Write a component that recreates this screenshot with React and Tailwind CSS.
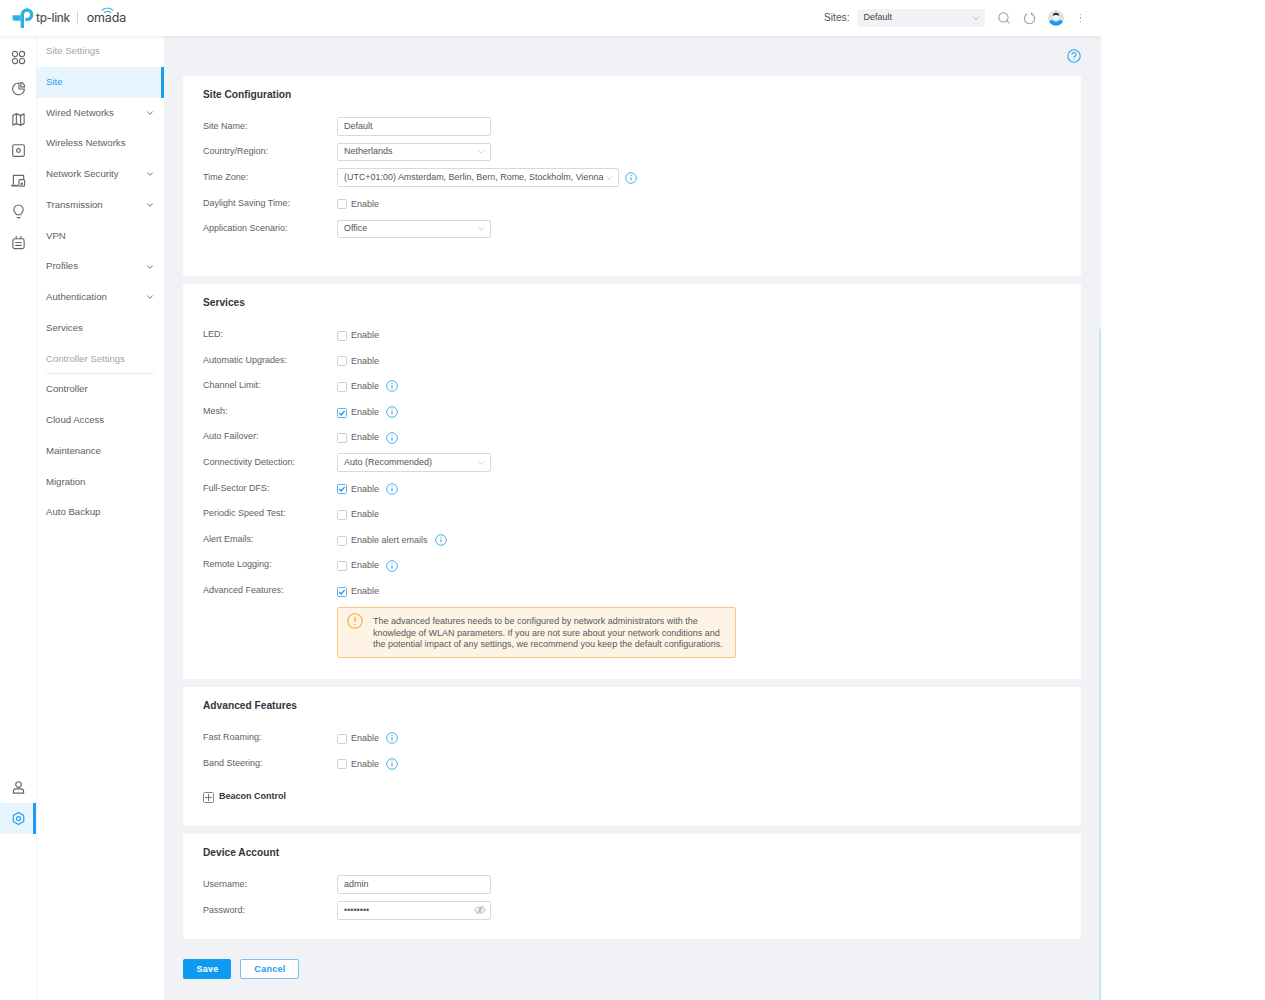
import { ChevronDown, Search } from 'lucide-react';

const navItems = [
  { label: 'Site Settings', header: true },
  { label: 'Site', active: true },
  { label: 'Wired Networks', more: true },
  { label: 'Wireless Networks' },
  { label: 'Network Security', more: true },
  { label: 'Transmission', more: true },
  { label: 'VPN' },
  { label: 'Profiles', more: true },
  { label: 'Authentication', more: true },
  { label: 'Services' },
  { label: 'Controller Settings', header: true, line: true },
  { label: 'Controller' },
  { label: 'Cloud Access' },
  { label: 'Maintenance' },
  { label: 'Migration' },
  { label: 'Auto Backup' },
];

function Logo() {
  return (
    <div className="flex items-center h-full pl-[12px]">
      <svg width="23" height="21" viewBox="0 0 23 21" fill="none" stroke="#2eb0e0" strokeWidth="3.4">
        <path d="M10.3 20V6.7a4.7 4.7 0 1 1 4.7 4.7h-1.6" />
        <path d="M0.5 7.3H8.6V12.7H2.5A2 2 0 0 1 .5 10.7Z" fill="#2eb0e0" stroke="none" />
      </svg>
      <span className="ml-[1px] mt-[1px] text-[11.7px] font-medium text-[#50555a] tracking-[-0.35px] font-['Inter',sans-serif]">tp-link</span>
      <div className="ml-[7px] h-[14px] w-px bg-[#d6d6d6]" />
      <div className="relative ml-[9px]">
        <span className="text-[12.5px] text-[#3d4247] tracking-[-0.1px] font-['Inter',sans-serif]">omada</span>
        <svg width="13" height="8" viewBox="0 0 14 8" fill="none" stroke="#2fa7e6" strokeWidth="1.2" className="absolute left-[14px] top-[-3px]">
          <path d="M1 4.5a8 8 0 0 1 12 0" />
          <path d="M3.5 7a4.5 4.5 0 0 1 7 0" />
        </svg>
      </div>
    </div>
  );
}

function RailIcon({ children, active }) {
  return (
    <div className={`relative flex items-center justify-center h-[30.75px] w-full ${active ? 'bg-[#e9f5fe] text-[#1a9cf0]' : 'text-[#62676c]'}`}>
      <svg width="15" height="15" viewBox="0 0 16 16" fill="none" stroke="currentColor" strokeWidth="1.2" strokeLinejoin="round" strokeLinecap="round">
        {children}
      </svg>
      {active && <div className="absolute right-0 top-0 bottom-0 w-[3px] bg-[#1a9cf0]" />}
    </div>
  );
}

function Sidebar() {
  return (
    <div className="flex shrink-0 h-full">
      <div className="flex flex-col w-[37px] bg-white pt-[6.6px] pb-[166px] border-r border-[#f0f2f5]">
        <RailIcon>
          <rect x="1.5" y="1.5" width="5.5" height="5.5" rx="2.5" />
          <rect x="9" y="1.5" width="5.5" height="5.5" rx="2.5" />
          <rect x="1.5" y="9" width="5.5" height="5.5" rx="2.5" />
          <rect x="9" y="9" width="5.5" height="5.5" rx="2.5" />
        </RailIcon>
        <RailIcon>
          <path d="M8.5 2.2A6.3 6.3 0 1 0 14.3 8.5H8.5Z" />
          <path d="M10.5 1.5a5 5 0 0 1 4 4.8h-4Z" />
        </RailIcon>
        <RailIcon>
          <path d="M2 3.6 5.7 2l4.6 1.6L14 2v10.4l-3.7 1.6-4.6-1.6L2 14Z" />
          <path d="M5.7 2v10.4M10.3 3.6V14" />
        </RailIcon>
        <RailIcon>
          <rect x="1.8" y="1.8" width="12.4" height="12.4" rx="1.5" />
          <circle cx="8" cy="8" r="2" />
        </RailIcon>
        <RailIcon>
          <path d="M2.5 12V2.5h11V6" />
          <path d="M1 13.5h6" strokeWidth="1.8" />
          <rect x="8.5" y="7" width="6" height="7" rx="1" />
          <circle cx="11.5" cy="11.5" r="0.8" />
        </RailIcon>
        <RailIcon>
          <path d="M6 11.5C5.5 10 3 8.8 3 6a5 5 0 0 1 10 0c0 2.8-2.5 4-3 5.5Z" />
          <path d="M6.5 14.5h3" />
        </RailIcon>
        <RailIcon>
          <rect x="2" y="4" width="12" height="10.5" rx="2" />
          <path d="M5.5 1.5V4M10.5 1.5V4M5 8h6M5 11h6" />
        </RailIcon>
        <div className="mt-auto">
          <RailIcon>
            <circle cx="8" cy="4.8" r="3" />
            <path d="M2.5 14v-1.5A3 3 0 0 1 5.5 9.5h5a3 3 0 0 1 3 3V14Z" />
          </RailIcon>
          <RailIcon active>
            <path d="M8 1.5 13.6 4.7v6.6L8 14.5l-5.6-3.2V4.7Z" />
            <circle cx="8" cy="8" r="2.2" />
          </RailIcon>
        </div>
      </div>
      <div className="w-[127px] bg-white">
        {navItems.map((item) => (
          <div
            key={item.label}
            className={`relative flex items-center h-[30.75px] pl-[9px] pr-[9px] text-[9.6px] ${
              item.active ? 'bg-[#e9f5fe] text-[#1a9cf0]' : item.header ? 'text-[#a3a6a9]' : 'text-[#5c6166]'
            }`}
          >
            <span className="flex-1">{item.label}</span>
            {item.more && <ChevronDown size={10} strokeWidth={2} className="text-[#555]" />}
            {item.active && <div className="absolute right-0 top-0 bottom-0 w-[3px] bg-[#1a9cf0]" />}
            {item.line && <div className="absolute left-[9px] right-[10px] bottom-0 h-px bg-[#e8eaec]" />}
          </div>
        ))}
      </div>
    </div>
  );
}

function TopBar() {
  return (
    <div className="relative z-10 flex items-center justify-between h-[36px] bg-white shadow-[0_1px_4px_rgba(0,0,0,0.08)] shrink-0">
      <Logo />
      <div className="flex items-center h-full pr-[20px]">
        <span className="text-[10.2px] text-[#4d5257]">Sites:</span>
        <div className="flex items-center justify-between ml-[7px] w-[128px] h-[18px] bg-[#f0f2f5] rounded-sm pl-[7px] pr-[4px] text-[9px] text-[#444]">
          Default
          <ChevronDown size={10} className="text-[#aaa]" />
        </div>
        <Search size={14} strokeWidth={1.8} className="ml-[12px] text-[#a0a0a0]" />
        <svg width="13" height="13" viewBox="0 0 14 14" fill="none" stroke="#a5a5a5" strokeWidth="1.3" className="ml-[12.5px]">
          <path d="M9.5 2.2a5.5 5.5 0 1 1-5 0" />
          <path d="M9.3 0.4v2.3h2.2" />
        </svg>
        <svg width="16" height="16" viewBox="0 0 16 16" className="ml-[11.5px]">
          <circle cx="8" cy="8" r="8" fill="#dfe3e6" />
          <path d="M1 11.5A8 8 0 0 0 15 11.5C13.5 9.5 11 10 8 12 5 10 2.5 9.5 1 11.5Z" fill="#1a9cf0" />
          <circle cx="8" cy="6.5" r="3" fill="#f4f4f4" />
          <path d="M4.8 6a3.2 3.2 0 0 1 6.4 0C9.5 4.5 6.5 4.5 4.8 6Z" fill="#333" />
        </svg>
        <div className="ml-[16px] flex flex-col gap-[2px]">
          <div className="w-[1.5px] h-[1.5px] bg-[#aaa]" />
          <div className="w-[1.5px] h-[1.5px] bg-[#aaa]" />
          <div className="w-[1.5px] h-[1.5px] bg-[#aaa]" />
        </div>
      </div>
    </div>
  );
}

function Info({ className = 'ml-[7px]' }) {
  return (
    <svg width="12" height="12" viewBox="0 0 12 12" fill="none" stroke="#35a6ee" strokeWidth="0.9" className={`-mt-[1px] ${className}`}>
      <circle cx="6" cy="6" r="5.3" />
      <path d="M6 5.2v3.4" strokeWidth="1.1" />
      <path d="M6 3v1" strokeWidth="1.1" />
    </svg>
  );
}

function Row({ label, children }) {
  return (
    <div className="flex items-center h-[25.6px]">
      <div className="w-[134px] shrink-0 text-[#5c6166]">{label}</div>
      <div className="flex items-center">{children}</div>
    </div>
  );
}

function Field({ value, wide, select, eye }) {
  return (
    <div className={`flex items-center justify-between h-[18.5px] bg-white border border-[#d9d9d9] rounded-[2px] pl-[6px] pr-[4px] text-[#555] ${wide ? 'w-[282px] text-[8.95px]' : 'w-[154px]'}`}>
      <span className="whitespace-nowrap">{value}</span>
      {select && <ChevronDown size={10} strokeWidth={1.3} className="shrink-0 text-[#a9a9a9]" />}
      {eye && (
        <svg width="12" height="10" viewBox="0 0 12 10" fill="none" stroke="#b5b5b5" strokeWidth="1" className="shrink-0">
          <path d="M0.7 5C2 3 4 2 6 2s4 1 5.3 3C10 7 8 8 6 8S2 7 .7 5Z" />
          <circle cx="6" cy="5" r="1.5" />
          <path d="M9.5 .7 2.5 9.3" />
        </svg>
      )}
    </div>
  );
}

function Check({ checked, text = 'Enable', info }) {
  return (
    <div className="flex items-center pt-[2px]">
      <div className={`flex items-center justify-center w-[10px] h-[10px] bg-white border rounded-[1.5px] ${checked ? 'border-[#55b3f2]' : 'border-[#cfcfcf]'}`}>
        {checked && (
          <svg width="8" height="8" viewBox="0 0 8 8" fill="none" stroke="#1a8fe0" strokeWidth="1.2">
            <path d="M1.3 4 3.2 6l3.5-4.2" />
          </svg>
        )}
      </div>
      <span className="ml-[4px] text-[#5c6166]">{text}</span>
      {info && <Info />}
    </div>
  );
}

function Card({ title, top = 'mt-[1px]', pb, children }) {
  return (
    <div className={`bg-white rounded-[2px] px-[20px] ${pb}`}>
      <div className="flex items-center h-[37px] font-bold text-[10.2px] text-[#33373b]">{title}</div>
      <div className={top}>{children}</div>
    </div>
  );
}

export default function App() {
  return (
    <div className="relative flex flex-col w-[1101px] h-screen overflow-hidden bg-[#f0f2f5] text-[9px] font-['Liberation_Sans',Arial,sans-serif]">
      <TopBar />
      <div className="flex flex-1 min-h-0">
        <Sidebar />
        <div className="flex-1 pl-[19px] pr-[20px]">
          <div className="flex items-center justify-end h-[40px]">
            <svg width="14" height="14" viewBox="0 0 14 14" fill="none" stroke="#2fa3ee" strokeWidth="1.1">
              <circle cx="7" cy="7" r="6.2" />
              <path d="M5 5.4a2 2 0 1 1 3 1.8c-.7.4-1 .8-1 1.5" />
              <path d="M7 10v.8" />
            </svg>
          </div>
          <div className="flex flex-col gap-[8px]">
            <Card title="Site Configuration" top="mt-[0.7px]" pb="pb-[34.3px]">
              <Row label="Site Name:"><Field value="Default" /></Row>
              <Row label="Country/Region:"><Field value="Netherlands" select /></Row>
              <Row label="Time Zone:">
                <Field value="(UTC+01:00) Amsterdam, Berlin, Bern, Rome, Stockholm, Vienna" wide select />
                <Info className="ml-[6px] mt-0" />
              </Row>
              <Row label="Daylight Saving Time:"><Check /></Row>
              <Row label="Application Scenario:"><Field value="Office" select /></Row>
            </Card>
            <Card title="Services" pb="pb-[20.4px]">
              <Row label="LED:"><Check /></Row>
              <Row label="Automatic Upgrades:"><Check /></Row>
              <Row label="Channel Limit:"><Check info /></Row>
              <Row label="Mesh:"><Check checked info /></Row>
              <Row label="Auto Failover:"><Check info /></Row>
              <Row label="Connectivity Detection:"><Field value="Auto (Recommended)" select /></Row>
              <Row label="Full-Sector DFS:"><Check checked info /></Row>
              <Row label="Periodic Speed Test:"><Check /></Row>
              <Row label="Alert Emails:"><Check text="Enable alert emails" info /></Row>
              <Row label="Remote Logging:"><Check info /></Row>
              <Row label="Advanced Features:"><Check checked /></Row>
              <div className="flex items-start ml-[134px] mt-[4px] w-[399px] h-[51px] bg-[#fff3e6] border border-[#fbc77f] rounded-[2px] pl-[9px] pt-[5px]">
                <svg width="16" height="16" viewBox="0 0 16 16" fill="none" stroke="#f7a936" strokeWidth="1.1" className="shrink-0">
                  <circle cx="8" cy="8" r="7.2" />
                  <path d="M8 3.8v5.4M8 11v1.2" strokeWidth="1.3" />
                </svg>
                <p className="ml-[10px] pt-[2.5px] w-[355px] leading-[11.7px] text-[#55595e]">
                  The advanced features needs to be configured by network administrators with the knowledge of WLAN parameters. If you are not sure about your network conditions and the potential impact of any settings, we recommend you keep the default configurations.
                </p>
              </div>
            </Card>
            <Card title="Advanced Features" pb="pb-[19.8px]">
              <Row label="Fast Roaming:"><Check info /></Row>
              <Row label="Band Steering:"><Check info /></Row>
              <div className="flex items-center mt-[12px] h-[18px]">
                <div className="flex items-center justify-center w-[11px] h-[11px] border border-[#888] rounded-[1.5px]">
                  <svg width="7" height="7" viewBox="0 0 7 7" stroke="#666" strokeWidth="0.9"><path d="M3.5 0v7M0 3.5h7" /></svg>
                </div>
                <span className="ml-[5px] font-bold text-[#33373b]">Beacon Control</span>
              </div>
            </Card>
            <Card title="Device Account" pb="pb-[15.8px]">
              <Row label="Username:"><Field value="admin" /></Row>
              <Row label="Password:">
                <Field value="••••••••" eye />
              </Row>
            </Card>
          </div>
          <div className="flex items-center gap-[9px] mt-[20px]">
            <button className="w-[48px] h-[20px] bg-[#0e9af1] rounded-[2px] pl-[1px] pt-[1px] font-bold tracking-[0.3px] text-white">Save</button>
            <button className="w-[59px] h-[20px] bg-white border border-[#75c3f6] rounded-[2px] pl-[1px] pt-[1px] font-bold tracking-[0.3px] text-[#1a9cf0]">Cancel</button>
          </div>
        </div>
      </div>
      <div className="absolute right-0 top-[329px] bottom-0 w-[2px] bg-[#c5e4f9]" />
    </div>
  );
}
